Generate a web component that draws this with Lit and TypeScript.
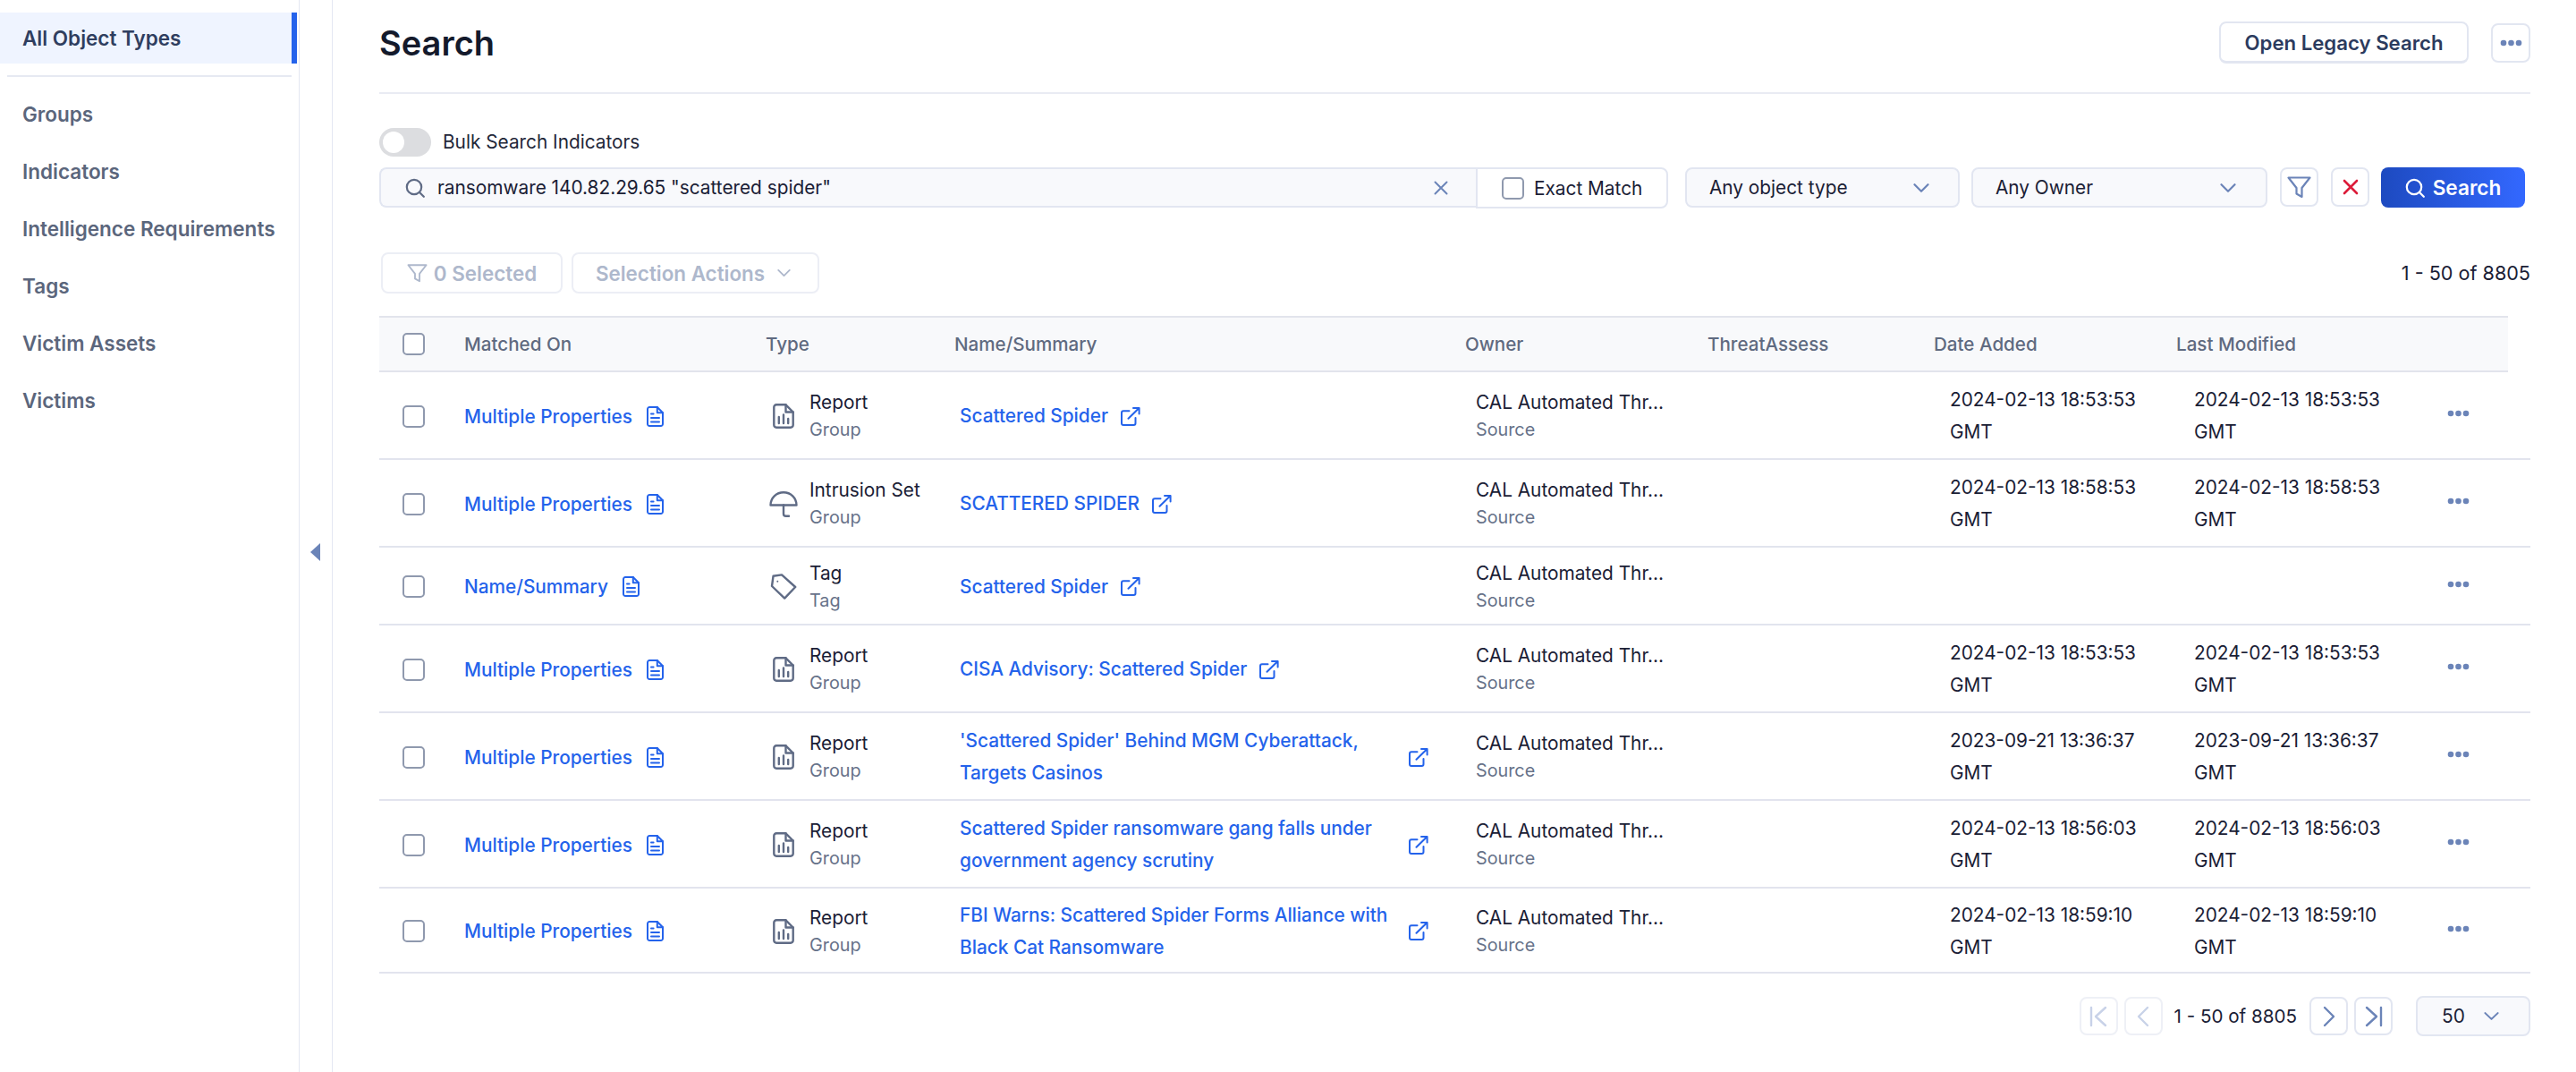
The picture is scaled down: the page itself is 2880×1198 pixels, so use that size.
import { LitElement, html, css } from 'lit';
import { customElement } from 'lit/decorators.js';

const BLUE_ICON = '#6b84b8';

const searchIcon = (color: string) => html`<svg width="22" height="22" viewBox="0 0 22 22" fill="none" stroke=${color} stroke-width="2.2" stroke-linecap="round"><circle cx="10" cy="10" r="8.2"></circle><path d="M16 16l4.8 4.8"></path></svg>`;
const chevron = (w = 18, h = 10, color = BLUE_ICON) => html`<svg width=${w} height=${h} viewBox="0 0 18 10" fill="none" stroke=${color} stroke-width="2.2" stroke-linecap="round" stroke-linejoin="round" preserveAspectRatio="none"><path d="M1.5 1.2L9 8.8l7.5-7.6"></path></svg>`;
const dots = html`<svg width="25" height="8" viewBox="0 0 25 8" fill=${BLUE_ICON}><circle cx="4" cy="4" r="3.3"></circle><circle cx="12.5" cy="4" r="3.3"></circle><circle cx="21" cy="4" r="3.3"></circle></svg>`;
const funnel = (w: number, h: number, color: string) => html`<svg width=${w} height=${h} viewBox="0 0 27 25" fill="none" stroke=${color} stroke-width="2.2" stroke-linejoin="round"><path d="M1.5 1.5h24L16.5 13v10l-6-3.5V13z"></path></svg>`;
const docIcon = html`<svg class="doc" width="19" height="23" viewBox="0 0 19 23" fill="none" stroke="#2463eb" stroke-width="2" stroke-linecap="round" stroke-linejoin="round"><path d="M3.2 1h8.6L18 7.2V19.8a2.2 2.2 0 0 1-2.2 2.2H3.2A2.2 2.2 0 0 1 1 19.8V3.2A2.2 2.2 0 0 1 3.2 1z"></path><path d="M11.8 1v6.2H18"></path><path d="M5 8.5h2.6M5 13h9M5 17.4h9"></path></svg>`;
const extIcon = html`<svg class="ext" width="22" height="21" viewBox="0 0 22 21" fill="none" stroke="#2463eb" stroke-width="2" stroke-linecap="round" stroke-linejoin="round"><path d="M9.5 4.2H3a2 2 0 0 0-2 2V18a2 2 0 0 0 2 2h11.5a2 2 0 0 0 2-2v-6"></path><path d="M8.5 12.8L20.5 1M14 1h6.6v6.6"></path></svg>`;
const reportIcon = html`<svg width="24" height="28" viewBox="0 0 24 28" fill="none" stroke="#5f6b85" stroke-width="2.4" stroke-linecap="round" stroke-linejoin="round"><path d="M4 1.3h10.5L22.7 9.5V24a2.7 2.7 0 0 1-2.7 2.7H4A2.7 2.7 0 0 1 1.3 24V4A2.7 2.7 0 0 1 4 1.3z"></path><path d="M14.5 1.3v8.2h8.2"></path><path d="M6.8 15v7M12 12.5V22M17.2 17v5"></path></svg>`;
const umbrellaIcon = html`<svg width="32" height="29" viewBox="0 0 32 29" fill="none" stroke="#5f6b85" stroke-width="2.4" stroke-linecap="round" stroke-linejoin="round"><path d="M1.5 15.5C1.5 7.5 8 1.3 16 1.3s14.5 6.2 14.5 14.2z"></path><path d="M16 15.5v9.7a2.6 2.6 0 0 0 2.6 2.6h3.4"></path></svg>`;
const tagIcon = html`<svg width="30" height="29" viewBox="0 0 30 29" fill="none" stroke="#5f6b85" stroke-width="2.4" stroke-linejoin="round"><path d="M3.5 2.8L13 1.4 28.2 15 16.2 27.6 2 14z"></path><circle cx="8.3" cy="8.8" r="1" fill="#5f6b85" stroke="none"></circle></svg>`;

type Row = {
  cls?: string;
  matched: string;
  type: string;
  sub: string;
  name: string;
  date: string;
  modified: string;
  icon: unknown;
};

const rows: Row[] = [
  { matched: 'Multiple Properties', type: 'Report', sub: 'Group', icon: reportIcon, name: 'Scattered Spider', date: '2024-02-13 18:53:53 GMT', modified: '2024-02-13 18:53:53 GMT' },
  { matched: 'Multiple Properties', type: 'Intrusion Set', sub: 'Group', icon: umbrellaIcon, name: 'SCATTERED SPIDER', date: '2024-02-13 18:58:53 GMT', modified: '2024-02-13 18:58:53 GMT' },
  { cls: 'short', matched: 'Name/Summary', type: 'Tag', sub: 'Tag', icon: tagIcon, name: 'Scattered Spider', date: '', modified: '' },
  { matched: 'Multiple Properties', type: 'Report', sub: 'Group', icon: reportIcon, name: 'CISA Advisory: Scattered Spider', date: '2024-02-13 18:53:53 GMT', modified: '2024-02-13 18:53:53 GMT' },
  { matched: 'Multiple Properties', type: 'Report', sub: 'Group', icon: reportIcon, name: "'Scattered Spider' Behind MGM Cyberattack, Targets Casinos", date: '2023-09-21 13:36:37 GMT', modified: '2023-09-21 13:36:37 GMT' },
  { matched: 'Multiple Properties', type: 'Report', sub: 'Group', icon: reportIcon, name: 'Scattered Spider ransomware gang falls under government agency scrutiny', date: '2024-02-13 18:56:03 GMT', modified: '2024-02-13 18:56:03 GMT' },
  { cls: 'last', matched: 'Multiple Properties', type: 'Report', sub: 'Group', icon: reportIcon, name: 'FBI Warns: Scattered Spider Forms Alliance with Black Cat Ransomware', date: '2024-02-13 18:59:10 GMT', modified: '2024-02-13 18:59:10 GMT' },
];

const navItems = ['Groups', 'Indicators', 'Intelligence Requirements', 'Tags', 'Victim Assets', 'Victims'];

@customElement('app-root')
export class AppRoot extends LitElement {
  static styles = css`
    :host {
      display: flex;
      width: 100%;
      height: 1198px;
      background: #fff;
      color: #1a2035;
      font-family: Inter, sans-serif;
      font-size: 20.8px;
      overflow: hidden;
    }

    .sidebar {
      width: 335px;
      flex: none;
      box-sizing: border-box;
      border-right: 1px solid #e4e7f2;
      padding-top: 14px;
    }
    .nav-active {
      width: 332px;
      height: 57px;
      box-sizing: border-box;
      display: flex;
      align-items: center;
      padding-left: 25px;
      background: #eff4ff;
      border-right: 6px solid #2563eb;
      font-size: 22.5px;
      font-weight: 600;
      color: #2f3e5f;
    }
    .nav-divider {
      height: 2px;
      margin: 13px 8px 9px;
      background: #e6e9f2;
    }
    .nav-item {
      height: 64px;
      display: flex;
      align-items: center;
      padding-left: 25px;
      font-size: 22.5px;
      font-weight: 600;
      color: #5b667c;
    }

    .collapse {
      width: 37px;
      flex: none;
      box-sizing: border-box;
      border-right: 1px solid #e4e7f2;
      display: flex;
      align-items: center;
      justify-content: center;
      padding: 36px 2px 0 0;
    }
    .collapse i {
      width: 0;
      height: 0;
      border-top: 10px solid transparent;
      border-bottom: 10px solid transparent;
      border-right: 11px solid #6b84b8;
    }

    main {
      flex: 1;
      min-width: 0;
      padding: 0 51px 0 52px;
    }

    header {
      height: 105px;
      box-sizing: border-box;
      border-bottom: 2px solid #e9ebf3;
      display: flex;
      align-items: flex-start;
      justify-content: space-between;
    }
    h1 {
      margin: 26px 0 0;
      font-size: 38px;
      line-height: 44px;
      font-weight: 600;
      color: #141a2c;
    }
    .head-actions {
      display: flex;
      align-items: center;
      gap: 25px;
      margin-top: 24px;
    }

    .btn {
      box-sizing: border-box;
      display: flex;
      align-items: center;
      justify-content: center;
      background: #fff;
      border: 2px solid #e2e6f1;
      border-radius: 8px;
    }
    .legacy {
      width: 279px;
      height: 47px;
      border-bottom-width: 3px;
      font-size: 22.2px;
      font-weight: 600;
      color: #2c3b5e;
    }
    .more {
      width: 44px;
      height: 44px;
    }

    .bulk {
      margin-top: 38px;
      display: flex;
      align-items: center;
      gap: 13px;
      height: 32px;
      color: #1f2739;
    }
    .bulk span {
      margin-top: -2px;
    }
    .toggle {
      width: 58px;
      height: 32px;
      box-sizing: border-box;
      padding: 4px;
      background: #dcdde0;
      border-radius: 16px;
    }
    .toggle i {
      display: block;
      width: 24px;
      height: 24px;
      border-radius: 50%;
      background: #fff;
    }

    .filters {
      margin-top: 12px;
      display: flex;
      align-items: flex-start;
    }
    .input {
      width: 1226px;
      height: 45px;
      box-sizing: border-box;
      display: flex;
      align-items: center;
      padding: 0 30px 0 27px;
      background: #f8f9fc;
      border: 2px solid #e2e6f1;
      border-right: none;
      border-radius: 8px 0 0 8px;
    }
    .input span {
      flex: 1;
      margin-left: 14px;
    }
    .exact {
      width: 215px;
      height: 46px;
      box-sizing: border-box;
      display: flex;
      align-items: center;
      gap: 11px;
      padding-left: 27px;
      background: #fff;
      border: 2px solid #e2e6f1;
      border-radius: 0 8px 8px 0;
    }
    .box {
      width: 25px;
      height: 25px;
      box-sizing: border-box;
      flex: none;
      background: #fff;
      border: 2px solid #8f99ae;
      border-radius: 5px;
    }
    .select {
      height: 45px;
      box-sizing: border-box;
      display: flex;
      align-items: center;
      justify-content: space-between;
      background: #f8f9fc;
      border: 2px solid #e2e6f1;
      border-radius: 8px;
    }
    .type {
      width: 307px;
      margin-left: 19px;
      padding: 0 32px 0 25px;
    }
    .owner {
      width: 331px;
      margin-left: 13px;
      padding: 0 33px 0 25px;
    }
    .icon-btn {
      width: 43px;
      height: 44px;
      margin-left: 14px;
    }
    .go {
      width: 161px;
      height: 45px;
      margin-left: 13px;
      display: flex;
      align-items: center;
      justify-content: center;
      gap: 9px;
      color: #fff;
      font-size: 22.6px;
      font-weight: 600;
      border-radius: 8px;
      background: linear-gradient(90deg, #1d4ac0, #3368ff);
    }

    .toolbar {
      margin-top: 49px;
      display: flex;
      align-items: center;
    }
    .ghost {
      height: 46px;
      margin-left: 2px;
      gap: 7px;
      border-color: #eceef5;
      color: #aeb8cc;
      font-size: 22.4px;
      font-weight: 600;
    }
    .selected {
      width: 203px;
    }
    .actions {
      width: 277px;
      margin-left: 10px;
      padding-right: 5px;
      gap: 14px;
    }
    .count {
      margin-left: auto;
      font-size: 21.6px;
    }

    .thead,
    .row {
      display: grid;
      grid-template-columns: 95px 337px 211px 571px 271px 253px 271px 271px 1fr;
      align-items: center;
    }
    .thead {
      margin: 25px 25px 0 0;
      height: 63px;
      box-sizing: border-box;
      background: #f8f9fb;
      border-top: 2px solid #e2e4ec;
      border-bottom: 2px solid #e2e4ec;
      color: #5f6a80;
      font-weight: 500;
      font-size: 20.6px;
    }
    .row {
      height: 98px;
      box-sizing: border-box;
      padding-top: 2px;
      border-bottom: 2px solid #e2e4ee;
    }
    .row.short {
      height: 87px;
    }
    .row.last {
      height: 95px;
    }
    .check {
      padding-left: 26px;
    }
    .link {
      color: #2463eb;
      font-weight: 500;
    }
    .matched {
      display: flex;
      align-items: center;
      gap: 16px;
    }
    .stack {
      display: flex;
      flex-direction: column;
      line-height: 31px;
    }
    .stack small {
      font-size: 19.8px;
      color: #677289;
    }
    .typecell {
      display: flex;
      align-items: center;
    }
    .typeicon {
      width: 40px;
      margin-right: 9px;
      display: flex;
      justify-content: center;
      flex: none;
    }
    .typeicon svg {
      display: block;
    }
    .name {
      display: flex;
      align-items: center;
      gap: 14px;
      padding-left: 6px;
      width: 524px;
      line-height: 36px;
    }
    .name svg,
    .matched svg {
      flex: none;
    }
    .name .ext {
      margin-left: auto;
    }
    .name.short-name .ext {
      margin-left: 0;
    }
    .ownercell {
      padding-left: 12px;
    }
    .stamp {
      line-height: 36px;
      padding-right: 20px;
    }
    .stamp.added {
      padding-left: 18px;
    }
    .stamp.changed {
      padding-left: 20px;
    }
    .rowmenu {
      display: flex;
      margin: -6px 0 0 32px;
    }

    footer {
      margin-top: 25px;
      display: flex;
      align-items: center;
      justify-content: flex-end;
    }
    .page {
      width: 43px;
      height: 43px;
      margin-left: 7px;
    }
    .page.off {
      border-color: #eef0f6;
    }
    .range {
      margin: 0 7px 0 13px;
      font-size: 20.6px;
    }
    .size {
      width: 128px;
      margin-left: 26px;
      padding: 0 33px 0 27px;
    }
  `;

  private renderRow(r: Row) {
    const isShort = r.name.length < 40;
    return html`
      <div class="row ${r.cls ?? ''}">
        <div class="check"><div class="box"></div></div>
        <div class="matched link"><span>${r.matched}</span>${docIcon}</div>
        <div class="typecell">
          <div class="typeicon">${r.icon}</div>
          <div class="stack"><span>${r.type}</span><small>${r.sub}</small></div>
        </div>
        <div class="name link ${isShort ? 'short-name' : ''}"><span>${r.name}</span>${extIcon}</div>
        <div class="stack ownercell"><span>CAL Automated Thr...</span><small>Source</small></div>
        <div></div>
        <div class="stamp added">${r.date}</div>
        <div class="stamp changed">${r.modified}</div>
        <div class="rowmenu">${dots}</div>
      </div>
    `;
  }

  render() {
    return html`
      <aside class="sidebar">
        <div class="nav-active">All Object Types</div>
        <div class="nav-divider"></div>
        ${navItems.map((n) => html`<div class="nav-item">${n}</div>`)}
      </aside>
      <div class="collapse"><i></i></div>
      <main>
        <header>
          <h1>Search</h1>
          <div class="head-actions">
            <div class="btn legacy">Open Legacy Search</div>
            <div class="btn more">${dots}</div>
          </div>
        </header>

        <div class="bulk"><div class="toggle"><i></i></div><span>Bulk Search Indicators</span></div>

        <div class="filters">
          <div class="input">
            ${searchIcon('#5f6b85')}
            <span>ransomware 140.82.29.65 "scattered spider"</span>
            <svg width="18" height="18" viewBox="0 0 18 18" fill="none" stroke=${BLUE_ICON} stroke-width="2" stroke-linecap="round"><path d="M2.5 2.5l13 13M15.5 2.5l-13 13"></path></svg>
          </div>
          <div class="exact"><div class="box"></div>Exact Match</div>
          <div class="select type">Any object type ${chevron()}</div>
          <div class="select owner">Any Owner ${chevron()}</div>
          <div class="btn icon-btn">${funnel(27, 25, BLUE_ICON)}</div>
          <div class="btn icon-btn">
            <svg width="18" height="18" viewBox="0 0 18 18" fill="none" stroke="#dc1c3a" stroke-width="2.6" stroke-linecap="round"><path d="M2 2l14 14M16 2L2 16"></path></svg>
          </div>
          <div class="go">${searchIcon('#fff')}Search</div>
        </div>

        <div class="toolbar">
          <div class="btn ghost selected">${funnel(23, 21, '#aeb8cc')}0 Selected</div>
          <div class="btn ghost actions">Selection Actions ${chevron(15, 8, '#aeb8cc')}</div>
          <div class="count">1 - 50 of 8805</div>
        </div>

        <div class="thead">
          <div class="check"><div class="box"></div></div>
          <div>Matched On</div>
          <div>Type</div>
          <div>Name/Summary</div>
          <div>Owner</div>
          <div>ThreatAssess</div>
          <div>Date Added</div>
          <div>Last Modified</div>
          <div></div>
        </div>
        ${rows.map((r) => this.renderRow(r))}

        <footer>
          <div class="btn page off">
            <svg width="22" height="24" viewBox="0 0 22 24" fill="none" stroke="#c8d2e8" stroke-width="2.4" stroke-linecap="round" stroke-linejoin="round"><path d="M3 2v20M19 2L8 12l11 10"></path></svg>
          </div>
          <div class="btn page off">
            <svg width="14" height="24" viewBox="0 0 14 24" fill="none" stroke="#c8d2e8" stroke-width="2.4" stroke-linecap="round" stroke-linejoin="round"><path d="M12 2L2 12l10 10"></path></svg>
          </div>
          <div class="range">1 - 50 of 8805</div>
          <div class="btn page">
            <svg width="14" height="24" viewBox="0 0 14 24" fill="none" stroke=${BLUE_ICON} stroke-width="2.4" stroke-linecap="round" stroke-linejoin="round"><path d="M2 2l10 10L2 22"></path></svg>
          </div>
          <div class="btn page">
            <svg width="22" height="24" viewBox="0 0 22 24" fill="none" stroke=${BLUE_ICON} stroke-width="2.4" stroke-linecap="round" stroke-linejoin="round"><path d="M3 2l11 10L3 22M19 2v20"></path></svg>
          </div>
          <div class="select size">50 ${chevron(17, 9)}</div>
        </footer>
      </main>
    `;
  }
}
